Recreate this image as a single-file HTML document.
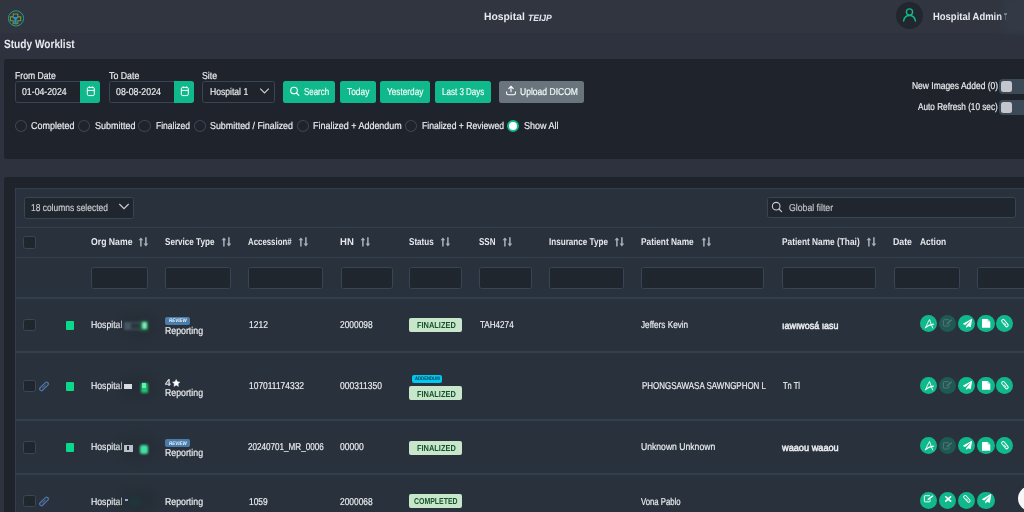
<!DOCTYPE html>
<html><head><meta charset="utf-8"><style>
html,body{margin:0;padding:0;}
body{width:1024px;height:512px;overflow:hidden;position:relative;background:#2d323e;font-family:'Liberation Sans', sans-serif;text-rendering:geometricPrecision;}
</style></head><body>
<div style="position:absolute;left:0px;top:0px;width:1024px;height:33px;background:#30353f;"></div>
<svg style="position:absolute;left:7px;top:10px" width="18" height="18" viewBox="0 0 18 18"><circle cx="9" cy="8.4" r="7.6" fill="none" stroke="#1f9f95" stroke-width="1"/><path d="M6.2 4h4.6v2.9h2.9v3.8h-2.9v3H6.2v-3H3.4V6.9h2.8z" fill="none" stroke="#7a9a30" stroke-width="1.1"/><path d="M5.3 7.1h6.4l-2.1 2.5v3.7H7.4V9.6z" fill="#2a8ed0"/></svg>
<div id="t1" style="position:absolute;left:483.7px;top:12px;font:700 10.5px/1 'Liberation Sans', sans-serif;color:#e8eaee;white-space:nowrap;transform:scaleX(0.9847);transform-origin:0 0;">Hospital</div>
<div id="t2" style="position:absolute;left:527.5px;top:14px;font:700 9px/1 'Liberation Sans', sans-serif;color:#e4e8ee;white-space:nowrap;transform:scaleX(0.9498);transform-origin:0 0;filter:blur(.45px);font-style:italic;">TEIJP</div>
<div style="position:absolute;left:896px;top:1.7px;width:27px;height:27px;border-radius:50%;background:#22262e"></div>
<svg style="position:absolute;left:900px;top:6px" width="19" height="19" viewBox="0 0 19 19"><circle cx="9.5" cy="6" r="3.1" fill="none" stroke="#12b886" stroke-width="1.4"/><path d="M3.6 14.9c.6-3.3 3-5.3 5.9-5.3s5.3 2 5.9 5.3" fill="none" stroke="#12b886" stroke-width="1.5" stroke-linecap="round"/></svg>
<div id="t3" style="position:absolute;left:932.7px;top:12px;font:700 10.5px/1 'Liberation Sans', sans-serif;color:#e8eaee;white-space:nowrap;transform:scaleX(0.9008);transform-origin:0 0;">Hospital Admin</div>
<div style="position:absolute;left:1002px;top:-4px;width:30px;height:38px;background:#3a4452;opacity:.35;filter:blur(4px)"></div>
<div style="position:absolute;left:1003.5px;top:13px;width:3px;height:1.5px;background:#9aa4b0;opacity:.6"></div><div style="position:absolute;left:1004.5px;top:14px;width:1px;height:6px;background:#9aa4b0;opacity:.35"></div>
<div id="t4" style="position:absolute;left:4px;top:38px;font:700 12px/1 'Liberation Sans', sans-serif;color:#e8eaee;white-space:nowrap;transform:scaleX(0.8434);transform-origin:0 0;">Study Worklist</div>
<div style="position:absolute;left:4px;top:59px;width:1030px;height:100px;background:#1f232b;border-radius:2.5px;"></div>
<div id="t5" style="position:absolute;left:15px;top:72px;font:400 10px/1 'Liberation Sans', sans-serif;color:#eceef1;white-space:nowrap;-webkit-text-stroke:0.18px;transform:scaleX(0.8614);transform-origin:0 0;">From Date</div>
<div id="t6" style="position:absolute;left:108.6px;top:72px;font:400 10px/1 'Liberation Sans', sans-serif;color:#eceef1;white-space:nowrap;-webkit-text-stroke:0.18px;transform:scaleX(0.8791);transform-origin:0 0;">To Date</div>
<div id="t7" style="position:absolute;left:202.3px;top:72px;font:400 10px/1 'Liberation Sans', sans-serif;color:#eceef1;white-space:nowrap;-webkit-text-stroke:0.18px;transform:scaleX(0.8762);transform-origin:0 0;">Site</div>
<div style="position:absolute;left:15px;top:81px;width:85px;height:22px;background:#1f232b;box-sizing:border-box;border:1px solid #384554;border-radius:2.5px;"></div>
<div style="position:absolute;left:79.5px;top:81px;width:20.5px;height:22px;background:#10b98b;border-radius:0 3px 3px 0;"></div>
<svg style="position:absolute;left:79.5px;top:81px" width="20.5" height="22" viewBox="0 0 20.5 22"><rect x="7.3" y="6.4" width="7" height="8.2" rx="1.4" fill="none" stroke="#fff" stroke-width="1"/><path d="M7.3 9.4h7M9.3 5.4v1.8M12.3 5.4v1.8" stroke="#fff" stroke-width="1"/></svg>
<div id="t8" style="position:absolute;left:22px;top:88px;font:400 10px/1 'Liberation Sans', sans-serif;color:#eceef1;white-space:nowrap;-webkit-text-stroke:0.18px;transform:scaleX(0.8738);transform-origin:0 0;">01-04-2024</div>
<div style="position:absolute;left:108.5px;top:81px;width:85.5px;height:22px;background:#1f232b;box-sizing:border-box;border:1px solid #384554;border-radius:2.5px;"></div>
<div style="position:absolute;left:173.5px;top:81px;width:20.5px;height:22px;background:#10b98b;border-radius:0 3px 3px 0;"></div>
<svg style="position:absolute;left:173.5px;top:81px" width="20.5" height="22" viewBox="0 0 20.5 22"><rect x="7.3" y="6.4" width="7" height="8.2" rx="1.4" fill="none" stroke="#fff" stroke-width="1"/><path d="M7.3 9.4h7M9.3 5.4v1.8M12.3 5.4v1.8" stroke="#fff" stroke-width="1"/></svg>
<div id="t9" style="position:absolute;left:115.5px;top:88px;font:400 10px/1 'Liberation Sans', sans-serif;color:#eceef1;white-space:nowrap;-webkit-text-stroke:0.18px;transform:scaleX(0.8777);transform-origin:0 0;">08-08-2024</div>
<div style="position:absolute;left:202px;top:81px;width:73px;height:22px;background:#1f232b;box-sizing:border-box;border:1px solid #384554;border-radius:2.5px;"></div>
<div id="t10" style="position:absolute;left:209.5px;top:88px;font:400 10px/1 'Liberation Sans', sans-serif;color:#eceef1;white-space:nowrap;-webkit-text-stroke:0.18px;transform:scaleX(0.8587);transform-origin:0 0;">Hospital 1</div>
<svg style="position:absolute;left:259px;top:87px" width="11" height="8" viewBox="0 0 11 8"><path d="M1.2 1.6l4.3 4.3 4.3-4.3" fill="none" stroke="#c9ced5" stroke-width="1.2"/></svg>
<div style="position:absolute;left:283px;top:81px;width:52px;height:22px;background:#10b98b;border-radius:2.5px;"></div>
<div id="t11" style="position:absolute;left:303.5px;top:88px;font:400 10px/1 'Liberation Sans', sans-serif;color:#f3fbf8;white-space:nowrap;-webkit-text-stroke:0.18px;transform:scaleX(0.7932);transform-origin:0 0;">Search</div>
<svg style="position:absolute;left:289px;top:86px" width="12" height="12" viewBox="0 0 12 12"><circle cx="5" cy="4.6" r="3.3" fill="none" stroke="#fff" stroke-width="1.1"/><path d="M7.4 7l2.4 2.4" stroke="#fff" stroke-width="1.2" stroke-linecap="round"/></svg>
<div style="position:absolute;left:340px;top:81px;width:36px;height:22px;background:#10b98b;border-radius:2.5px;"></div>
<div id="t12" style="position:absolute;left:347.3px;top:88px;font:400 10px/1 'Liberation Sans', sans-serif;color:#f3fbf8;white-space:nowrap;-webkit-text-stroke:0.18px;transform:scaleX(0.8383);transform-origin:0 0;">Today</div>
<div style="position:absolute;left:380px;top:81px;width:50px;height:22px;background:#10b98b;border-radius:2.5px;"></div>
<div id="t13" style="position:absolute;left:387.3px;top:88px;font:400 10px/1 'Liberation Sans', sans-serif;color:#f3fbf8;white-space:nowrap;-webkit-text-stroke:0.18px;transform:scaleX(0.8243);transform-origin:0 0;">Yesterday</div>
<div style="position:absolute;left:434.5px;top:81px;width:56.5px;height:22px;background:#10b98b;border-radius:2.5px;"></div>
<div id="t14" style="position:absolute;left:442.3px;top:88px;font:400 10px/1 'Liberation Sans', sans-serif;color:#f3fbf8;white-space:nowrap;-webkit-text-stroke:0.18px;transform:scaleX(0.8018);transform-origin:0 0;">Last 3 Days</div>
<div style="position:absolute;left:499px;top:81px;width:85px;height:22px;background:#6a747c;border-radius:2.5px;"></div>
<div id="t15" style="position:absolute;left:519.6px;top:88px;font:400 10px/1 'Liberation Sans', sans-serif;color:#f3fbf8;white-space:nowrap;-webkit-text-stroke:0.18px;transform:scaleX(0.8550);transform-origin:0 0;">Upload DICOM</div>
<svg style="position:absolute;left:505px;top:85px" width="12" height="12" viewBox="0 0 12 12"><path d="M6 7.3V1.5M3.5 3.9L6 1.3l2.5 2.6" fill="none" stroke="#fff" stroke-width="1.1"/><path d="M1.6 6.6v1.6a1.6 1.6 0 0 0 1.6 1.6h5.6a1.6 1.6 0 0 0 1.6-1.6V6.6" fill="none" stroke="#fff" stroke-width="1.1"/></svg>
<div style="position:absolute;left:14.5px;top:119.9px;width:12.6px;height:12.2px;box-sizing:border-box;border-radius:50%;border:1px solid #3b4654"></div>
<div id="t16" style="position:absolute;left:31px;top:122px;font:400 10px/1 'Liberation Sans', sans-serif;color:#eceef1;white-space:nowrap;-webkit-text-stroke:0.18px;transform:scaleX(0.8978);transform-origin:0 0;">Completed</div>
<div style="position:absolute;left:77.7px;top:119.9px;width:12.6px;height:12.2px;box-sizing:border-box;border-radius:50%;border:1px solid #3b4654"></div>
<div id="t17" style="position:absolute;left:94.7px;top:122px;font:400 10px/1 'Liberation Sans', sans-serif;color:#eceef1;white-space:nowrap;-webkit-text-stroke:0.18px;transform:scaleX(0.9021);transform-origin:0 0;">Submitted</div>
<div style="position:absolute;left:138.3px;top:119.9px;width:12.6px;height:12.2px;box-sizing:border-box;border-radius:50%;border:1px solid #3b4654"></div>
<div id="t18" style="position:absolute;left:155.6px;top:122px;font:400 10px/1 'Liberation Sans', sans-serif;color:#eceef1;white-space:nowrap;-webkit-text-stroke:0.18px;transform:scaleX(0.8514);transform-origin:0 0;">Finalized</div>
<div style="position:absolute;left:193.7px;top:119.9px;width:12.6px;height:12.2px;box-sizing:border-box;border-radius:50%;border:1px solid #3b4654"></div>
<div id="t19" style="position:absolute;left:210px;top:122px;font:400 10px/1 'Liberation Sans', sans-serif;color:#eceef1;white-space:nowrap;-webkit-text-stroke:0.18px;transform:scaleX(0.8888);transform-origin:0 0;">Submitted / Finalized</div>
<div style="position:absolute;left:296.7px;top:119.9px;width:12.6px;height:12.2px;box-sizing:border-box;border-radius:50%;border:1px solid #3b4654"></div>
<div id="t20" style="position:absolute;left:313px;top:122px;font:400 10px/1 'Liberation Sans', sans-serif;color:#eceef1;white-space:nowrap;-webkit-text-stroke:0.18px;transform:scaleX(0.8940);transform-origin:0 0;">Finalized + Addendum</div>
<div style="position:absolute;left:404.5px;top:119.9px;width:12.6px;height:12.2px;box-sizing:border-box;border-radius:50%;border:1px solid #3b4654"></div>
<div id="t21" style="position:absolute;left:421.6px;top:122px;font:400 10px/1 'Liberation Sans', sans-serif;color:#eceef1;white-space:nowrap;-webkit-text-stroke:0.18px;transform:scaleX(0.8600);transform-origin:0 0;">Finalized + Reviewed</div>
<div style="position:absolute;left:506.6px;top:119.7px;width:12.6px;height:12.6px;box-sizing:border-box;border-radius:50%;background:#fff;border:2.6px solid #10b98b"></div>
<div id="t22" style="position:absolute;left:523.5px;top:122px;font:400 10px/1 'Liberation Sans', sans-serif;color:#eceef1;white-space:nowrap;-webkit-text-stroke:0.18px;transform:scaleX(0.8999);transform-origin:0 0;">Show All</div>
<div id="t23" style="position:absolute;left:911.6px;top:82px;font:400 10px/1 'Liberation Sans', sans-serif;color:#eceef1;white-space:nowrap;-webkit-text-stroke:0.18px;transform:scaleX(0.8462);transform-origin:0 0;">New Images Added (0)</div>
<div id="t24" style="position:absolute;left:917.9px;top:103px;font:400 10px/1 'Liberation Sans', sans-serif;color:#eceef1;white-space:nowrap;-webkit-text-stroke:0.18px;transform:scaleX(0.8199);transform-origin:0 0;">Auto Refresh (10 sec)</div>
<div style="position:absolute;left:999px;top:79.4px;width:40px;height:14.5px;background:#3c4957;border-radius:4px;"></div>
<div style="position:absolute;left:1001px;top:81.2px;width:11.2px;height:11px;background:#c3c7cd;border-radius:2.5px;"></div>
<div style="position:absolute;left:999px;top:100px;width:40px;height:14.5px;background:#3c4957;border-radius:4px;"></div>
<div style="position:absolute;left:1001px;top:101.8px;width:11.2px;height:11px;background:#c3c7cd;border-radius:2.5px;"></div>
<div style="position:absolute;left:4px;top:177px;width:1030px;height:400px;background:#1f232b;border-radius:2.5px;"></div>
<div style="position:absolute;left:14.5px;top:188px;width:1020px;height:400px;background:#29323c;box-sizing:border-box;border-top:1px solid #323f4c;border-left:1px solid #323f4c;"></div>
<div style="position:absolute;left:23.8px;top:197px;width:110px;height:21.8px;background:#20262e;box-sizing:border-box;border:1px solid #384554;border-radius:2.5px;"></div>
<div id="t25" style="position:absolute;left:30.8px;top:204px;font:400 10px/1 'Liberation Sans', sans-serif;color:#c9cdd3;white-space:nowrap;-webkit-text-stroke:0.18px;transform:scaleX(0.8431);transform-origin:0 0;">18 columns selected</div>
<svg style="position:absolute;left:117.5px;top:202px" width="12" height="9" viewBox="0 0 12 9"><path d="M1.3 2l4.7 4.6 4.7-4.6" fill="none" stroke="#c9ced5" stroke-width="1.2"/></svg>
<div style="position:absolute;left:766.5px;top:197.3px;width:249.5px;height:21px;background:#20262e;box-sizing:border-box;border:1px solid #384554;border-radius:2.5px;"></div>
<svg style="position:absolute;left:771px;top:201px" width="12" height="12" viewBox="0 0 12 12"><circle cx="5.2" cy="5.2" r="3.8" fill="none" stroke="#c9ced5" stroke-width="1.1"/><path d="M8 8l2.6 2.6" stroke="#c9ced5" stroke-width="1.2" stroke-linecap="round"/></svg>
<div id="t26" style="position:absolute;left:788.6px;top:204px;font:400 10px/1 'Liberation Sans', sans-serif;color:#bfc4ca;white-space:nowrap;-webkit-text-stroke:0.18px;transform:scaleX(0.8718);transform-origin:0 0;">Global filter</div>
<div style="position:absolute;left:14.5px;top:226.6px;width:1020px;height:1.8px;background:#323f4c;"></div>
<div style="position:absolute;left:14.5px;top:256.6px;width:1020px;height:1.8px;background:#323f4c;"></div>
<div style="position:absolute;left:14.5px;top:297.1px;width:1020px;height:1.8px;background:#323f4c;"></div>
<div style="position:absolute;left:14.5px;top:351.20000000000005px;width:1020px;height:1.8px;background:#323f4c;"></div>
<div style="position:absolute;left:14.5px;top:419.1px;width:1020px;height:1.8px;background:#323f4c;"></div>
<div style="position:absolute;left:14.5px;top:473.1px;width:1020px;height:1.8px;background:#323f4c;"></div>
<div style="position:absolute;left:23.3px;top:236.1px;width:12.6px;height:12.6px;background:#20262e;box-sizing:border-box;border:1px solid #3a4654;border-radius:2.5px;"></div>
<div id="t27" style="position:absolute;left:90.5px;top:238px;font:700 10px/1 'Liberation Sans', sans-serif;color:#e6e8ec;white-space:nowrap;transform:scaleX(0.8681);transform-origin:0 0;">Org Name</div>
<svg style="position:absolute;left:138.3px;top:236.8px" width="11" height="10" viewBox="0 0 11 10"><path d="M2.9 9.5V2.5M7.9 0.3v7" stroke="#a9b1ba" stroke-width="1.5"/><path d="M0.6 3.3L2.9 0.5 5.2 3.3z M5.6 6.5L7.9 9.4 10.2 6.5z" fill="#a9b1ba"/></svg>
<div id="t28" style="position:absolute;left:165px;top:238px;font:700 10px/1 'Liberation Sans', sans-serif;color:#e6e8ec;white-space:nowrap;transform:scaleX(0.8110);transform-origin:0 0;">Service Type</div>
<svg style="position:absolute;left:220.5px;top:236.8px" width="11" height="10" viewBox="0 0 11 10"><path d="M2.9 9.5V2.5M7.9 0.3v7" stroke="#a9b1ba" stroke-width="1.5"/><path d="M0.6 3.3L2.9 0.5 5.2 3.3z M5.6 6.5L7.9 9.4 10.2 6.5z" fill="#a9b1ba"/></svg>
<div id="t29" style="position:absolute;left:248px;top:238px;font:700 10px/1 'Liberation Sans', sans-serif;color:#e6e8ec;white-space:nowrap;transform:scaleX(0.7847);transform-origin:0 0;">Accession#</div>
<svg style="position:absolute;left:298.3px;top:236.8px" width="11" height="10" viewBox="0 0 11 10"><path d="M2.9 9.5V2.5M7.9 0.3v7" stroke="#a9b1ba" stroke-width="1.5"/><path d="M0.6 3.3L2.9 0.5 5.2 3.3z M5.6 6.5L7.9 9.4 10.2 6.5z" fill="#a9b1ba"/></svg>
<div id="t30" style="position:absolute;left:340px;top:238px;font:700 10px/1 'Liberation Sans', sans-serif;color:#e6e8ec;white-space:nowrap;transform:scaleX(0.9522);transform-origin:0 0;">HN</div>
<svg style="position:absolute;left:360.0px;top:236.8px" width="11" height="10" viewBox="0 0 11 10"><path d="M2.9 9.5V2.5M7.9 0.3v7" stroke="#a9b1ba" stroke-width="1.5"/><path d="M0.6 3.3L2.9 0.5 5.2 3.3z M5.6 6.5L7.9 9.4 10.2 6.5z" fill="#a9b1ba"/></svg>
<div id="t31" style="position:absolute;left:409.3px;top:238px;font:700 10px/1 'Liberation Sans', sans-serif;color:#e6e8ec;white-space:nowrap;transform:scaleX(0.8063);transform-origin:0 0;">Status</div>
<svg style="position:absolute;left:440.3px;top:236.8px" width="11" height="10" viewBox="0 0 11 10"><path d="M2.9 9.5V2.5M7.9 0.3v7" stroke="#a9b1ba" stroke-width="1.5"/><path d="M0.6 3.3L2.9 0.5 5.2 3.3z M5.6 6.5L7.9 9.4 10.2 6.5z" fill="#a9b1ba"/></svg>
<div id="t32" style="position:absolute;left:479.3px;top:238px;font:700 10px/1 'Liberation Sans', sans-serif;color:#e6e8ec;white-space:nowrap;transform:scaleX(0.7995);transform-origin:0 0;">SSN</div>
<svg style="position:absolute;left:502.0px;top:236.8px" width="11" height="10" viewBox="0 0 11 10"><path d="M2.9 9.5V2.5M7.9 0.3v7" stroke="#a9b1ba" stroke-width="1.5"/><path d="M0.6 3.3L2.9 0.5 5.2 3.3z M5.6 6.5L7.9 9.4 10.2 6.5z" fill="#a9b1ba"/></svg>
<div id="t33" style="position:absolute;left:548.8px;top:238px;font:700 10px/1 'Liberation Sans', sans-serif;color:#e6e8ec;white-space:nowrap;transform:scaleX(0.8117);transform-origin:0 0;">Insurance Type</div>
<svg style="position:absolute;left:614.0px;top:236.8px" width="11" height="10" viewBox="0 0 11 10"><path d="M2.9 9.5V2.5M7.9 0.3v7" stroke="#a9b1ba" stroke-width="1.5"/><path d="M0.6 3.3L2.9 0.5 5.2 3.3z M5.6 6.5L7.9 9.4 10.2 6.5z" fill="#a9b1ba"/></svg>
<div id="t34" style="position:absolute;left:641.3px;top:238px;font:700 10px/1 'Liberation Sans', sans-serif;color:#e6e8ec;white-space:nowrap;transform:scaleX(0.8313);transform-origin:0 0;">Patient Name</div>
<svg style="position:absolute;left:700.8px;top:236.8px" width="11" height="10" viewBox="0 0 11 10"><path d="M2.9 9.5V2.5M7.9 0.3v7" stroke="#a9b1ba" stroke-width="1.5"/><path d="M0.6 3.3L2.9 0.5 5.2 3.3z M5.6 6.5L7.9 9.4 10.2 6.5z" fill="#a9b1ba"/></svg>
<div id="t35" style="position:absolute;left:781.8px;top:238px;font:700 10px/1 'Liberation Sans', sans-serif;color:#e6e8ec;white-space:nowrap;transform:scaleX(0.8319);transform-origin:0 0;">Patient Name (Thai)</div>
<svg style="position:absolute;left:865.8px;top:236.8px" width="11" height="10" viewBox="0 0 11 10"><path d="M2.9 9.5V2.5M7.9 0.3v7" stroke="#a9b1ba" stroke-width="1.5"/><path d="M0.6 3.3L2.9 0.5 5.2 3.3z M5.6 6.5L7.9 9.4 10.2 6.5z" fill="#a9b1ba"/></svg>
<div id="t36" style="position:absolute;left:893px;top:238px;font:700 10px/1 'Liberation Sans', sans-serif;color:#e6e8ec;white-space:nowrap;transform:scaleX(0.8762);transform-origin:0 0;">Date</div>
<div id="t37" style="position:absolute;left:920px;top:238px;font:700 10px/1 'Liberation Sans', sans-serif;color:#e6e8ec;white-space:nowrap;transform:scaleX(0.8413);transform-origin:0 0;">Action</div>
<div style="position:absolute;left:91.3px;top:267px;width:56.7px;height:21.6px;background:#20262e;box-sizing:border-box;border:1px solid #384554;border-radius:2.5px;"></div>
<div style="position:absolute;left:165px;top:267px;width:65.80000000000001px;height:21.6px;background:#20262e;box-sizing:border-box;border:1px solid #384554;border-radius:2.5px;"></div>
<div style="position:absolute;left:248px;top:267px;width:75px;height:21.6px;background:#20262e;box-sizing:border-box;border:1px solid #384554;border-radius:2.5px;"></div>
<div style="position:absolute;left:340.5px;top:267px;width:52.0px;height:21.6px;background:#20262e;box-sizing:border-box;border:1px solid #384554;border-radius:2.5px;"></div>
<div style="position:absolute;left:409px;top:267px;width:52.80000000000001px;height:21.6px;background:#20262e;box-sizing:border-box;border:1px solid #384554;border-radius:2.5px;"></div>
<div style="position:absolute;left:479.3px;top:267px;width:52.49999999999994px;height:21.6px;background:#20262e;box-sizing:border-box;border:1px solid #384554;border-radius:2.5px;"></div>
<div style="position:absolute;left:549.3px;top:267px;width:75.0px;height:21.6px;background:#20262e;box-sizing:border-box;border:1px solid #384554;border-radius:2.5px;"></div>
<div style="position:absolute;left:641.3px;top:267px;width:123.20000000000005px;height:21.6px;background:#20262e;box-sizing:border-box;border:1px solid #384554;border-radius:2.5px;"></div>
<div style="position:absolute;left:781.8px;top:267px;width:94.5px;height:21.6px;background:#20262e;box-sizing:border-box;border:1px solid #384554;border-radius:2.5px;"></div>
<div style="position:absolute;left:893.5px;top:267px;width:66.29999999999995px;height:21.6px;background:#20262e;box-sizing:border-box;border:1px solid #384554;border-radius:2.5px;"></div>
<div style="position:absolute;left:977.3px;top:267px;width:82.70000000000005px;height:21.6px;background:#20262e;box-sizing:border-box;border:1px solid #384554;border-radius:2.5px;"></div>
<div style="position:absolute;left:23.3px;top:318.9px;width:12.6px;height:12.6px;background:#20262e;box-sizing:border-box;border:1px solid #3a4654;border-radius:2.5px;"></div>
<div style="position:absolute;left:66px;top:320.9px;width:8.3px;height:9px;background:#08d98a;border-radius:1px;"></div>
<div id="t38" style="position:absolute;left:90.9px;top:321px;font:400 10px/1 'Liberation Sans', sans-serif;color:#eceef1;white-space:nowrap;-webkit-text-stroke:0.18px;transform:scaleX(0.8687);transform-origin:0 0;">Hospital</div>
<div style="position:absolute;left:118px;top:312.5px;width:40px;height:26px;border-radius:50%;background:#202830;opacity:.35;filter:blur(4px)"></div>
<div style="position:absolute;left:124px;top:321.5px;width:17px;height:8px;background:#5c7080;opacity:.6;filter:blur(1.3px)"></div>
<div style="position:absolute;left:131px;top:322.5px;width:10px;height:6px;background:#10181e;opacity:.5;filter:blur(1px)"></div>
<div style="position:absolute;left:140px;top:320.5px;width:8px;height:10px;background:#187040;opacity:.8;filter:blur(1.5px)"></div>
<div style="position:absolute;left:142px;top:321.9px;width:5px;height:7px;background:#80e8b8;border-radius:1px;filter:blur(1px)"></div>
<div style="position:absolute;left:165.4px;top:316.6px;width:24.3px;height:8.1px;background:#4a7cab;border-radius:2px;"></div>
<div id="t39" style="position:absolute;left:169px;top:319px;font:700 5.2px/1 'Liberation Sans', sans-serif;color:#e8f0f8;white-space:nowrap;transform:scaleX(0.8644);transform-origin:0 0;font-style:italic;">REVIEW</div>
<div id="t40" style="position:absolute;left:165px;top:327px;font:400 10px/1 'Liberation Sans', sans-serif;color:#eceef1;white-space:nowrap;-webkit-text-stroke:0.18px;transform:scaleX(0.8765);transform-origin:0 0;">Reporting</div>
<div id="t41" style="position:absolute;left:248.8px;top:321px;font:400 10px/1 'Liberation Sans', sans-serif;color:#eceef1;white-space:nowrap;-webkit-text-stroke:0.18px;transform:scaleX(0.8485);transform-origin:0 0;">1212</div>
<div id="t42" style="position:absolute;left:340.3px;top:321px;font:400 10px/1 'Liberation Sans', sans-serif;color:#eceef1;white-space:nowrap;-webkit-text-stroke:0.18px;transform:scaleX(0.8390);transform-origin:0 0;">2000098</div>
<div style="position:absolute;left:409.4px;top:318px;width:52.6px;height:14px;background:#c8e6c9;border-radius:2px;"></div>
<div id="t43" style="position:absolute;left:416.9px;top:321px;font:700 8.6px/1 'Liberation Sans', sans-serif;color:#175230;white-space:nowrap;transform:scaleX(0.8644);transform-origin:0 0;">FINALIZED</div>
<div id="t44" style="position:absolute;left:480px;top:321px;font:400 10px/1 'Liberation Sans', sans-serif;color:#eceef1;white-space:nowrap;-webkit-text-stroke:0.18px;transform:scaleX(0.8105);transform-origin:0 0;">TAH4274</div>
<div id="t45" style="position:absolute;left:641.3px;top:321px;font:400 10px/1 'Liberation Sans', sans-serif;color:#eceef1;white-space:nowrap;-webkit-text-stroke:0.18px;transform:scaleX(0.8183);transform-origin:0 0;">Jeffers Kevin</div>
<div id="t46" style="position:absolute;left:782.3px;top:322px;font:400 10px/1 'Liberation Sans', sans-serif;color:#eceef1;white-space:nowrap;-webkit-text-stroke:0.18px;transform:scaleX(0.8917);transform-origin:0 0;-webkit-text-stroke:0.5px;">ıawıwosá ıasu</div>
<div style="position:absolute;left:919.9px;top:314.9px;width:17.2px;height:17.2px;border-radius:50%;background:#10b98b"></div>
<svg style="position:absolute;left:925.10px;top:318.90px;overflow:visible" width="9.00" height="9.80" viewBox="0 0 100 100" preserveAspectRatio="none"><path d="M6 90C18 62 34 30 50 6C62 36 72 64 86 92" fill="none" stroke="#fff" stroke-width="10" stroke-linecap="round" stroke-linejoin="round"/><path d="M4 88C26 68 56 56 94 52" fill="none" stroke="#fff" stroke-width="11" stroke-linecap="round"/></svg>
<div style="position:absolute;left:938.9px;top:314.9px;width:17.2px;height:17.2px;border-radius:50%;background:#1d5a52"></div>
<svg style="position:absolute;left:942.90px;top:319.30px;overflow:visible" width="9.40" height="7.40" viewBox="0 0 100 80" preserveAspectRatio="none"><path d="M62 8H10Q4 8 4 14V70Q4 76 10 76H58Q64 76 64 70V48" fill="none" stroke="#62707a" stroke-width="10"/><path d="M34 60L40 42L88 4L98 14L52 52Z" fill="#62707a"/></svg>
<div style="position:absolute;left:958.0px;top:314.9px;width:17.2px;height:17.2px;border-radius:50%;background:#10b98b"></div>
<svg style="position:absolute;left:962.70px;top:319.00px;overflow:visible" width="9.10" height="8.70" viewBox="0 0 512 512" preserveAspectRatio="none"><path fill="#fff" d="M476 3.2L12.5 270.6c-18.1 10.4-15.8 35.6 2.2 43.2L121 358.4l287.3-253.2c5.5-4.9 13.3 2.6 8.6 8.3L176 407v80.5c0 23.6 28.5 32.9 42.5 15.8L282 426l124.6 52.2c14.2 6 30.4-2.9 33-18.2l72-432C515 7.8 493.3-6.8 476 3.2z"/></svg>
<div style="position:absolute;left:977.4px;top:314.9px;width:17.2px;height:17.2px;border-radius:50%;background:#10b98b"></div>
<svg style="position:absolute;left:982.00px;top:319.30px;overflow:visible" width="8.30" height="8.70" viewBox="0 0 83 87" preserveAspectRatio="none"><path d="M0 0H56L83 27V87H0Z" fill="#fff"/><path d="M56 0V27H83Z" fill="#a9dfd0"/></svg>
<div style="position:absolute;left:996.3px;top:314.9px;width:17.2px;height:17.2px;border-radius:50%;background:#10b98b"></div>
<svg style="position:absolute;left:1001.40px;top:319.00px;overflow:visible" width="7.90" height="8.50" viewBox="0 0 80 85" preserveAspectRatio="none"><path d="M22 20L58 63" stroke="#fff" stroke-width="40" stroke-linecap="round"/><path d="M22 20L58 63" stroke="#10b98b" stroke-width="20" stroke-linecap="round"/><path d="M34 40L50 59" stroke="#fff" stroke-width="9" stroke-linecap="round"/></svg>
<div style="position:absolute;left:23.3px;top:379.9px;width:12.6px;height:12.6px;background:#20262e;box-sizing:border-box;border:1px solid #3a4654;border-radius:2.5px;"></div>
<div style="position:absolute;left:66px;top:381.5px;width:8.3px;height:9px;background:#08d98a;border-radius:1px;"></div>
<svg style="position:absolute;left:38px;top:380.5px" width="12" height="11" viewBox="0 0 12 11"><path d="M3.4 8L8.6 2.9" stroke="#5276aa" stroke-width="4.6" stroke-linecap="round"/><path d="M3.4 8L8.6 2.9" stroke="#29323c" stroke-width="2.2" stroke-linecap="round"/><path d="M4.3 7.1L7.6 3.9" stroke="#5276aa" stroke-width="1"/></svg>
<div id="t47" style="position:absolute;left:90.9px;top:382px;font:400 10px/1 'Liberation Sans', sans-serif;color:#eceef1;white-space:nowrap;-webkit-text-stroke:0.18px;transform:scaleX(0.8687);transform-origin:0 0;">Hospital</div>
<div style="position:absolute;left:118px;top:373.5px;width:40px;height:26px;border-radius:50%;background:#202830;opacity:.35;filter:blur(4px)"></div>
<div style="position:absolute;left:124px;top:383.9px;width:8px;height:5.5px;background:#e8eef4;opacity:.9;filter:blur(.6px)"></div>
<div style="position:absolute;left:141px;top:382.5px;width:6.5px;height:10px;background:#1fc070;border-radius:1px;filter:blur(.8px)"></div>
<div style="position:absolute;left:142px;top:383.0px;width:4px;height:5px;background:#60f0b0;filter:blur(.7px)"></div>
<div id="t48" style="position:absolute;left:165px;top:379px;font:400 10px/1 'Liberation Sans', sans-serif;color:#eceef1;white-space:nowrap;-webkit-text-stroke:0.18px;transform:scaleX(1.0498);transform-origin:0 0;">4</div>
<svg style="position:absolute;left:172px;top:379.2px" width="8.4" height="8" viewBox="0 0 24 23"><path d="M12 1.5l3.1 6.6 7.2.9-5.3 5 1.4 7.1L12 17.6l-6.4 3.5L7 14 1.7 9l7.2-.9z" fill="#fff" stroke="#fff" stroke-width="1.6" stroke-linejoin="round"/></svg>
<div id="t49" style="position:absolute;left:165px;top:389px;font:400 10px/1 'Liberation Sans', sans-serif;color:#eceef1;white-space:nowrap;-webkit-text-stroke:0.18px;transform:scaleX(0.8764);transform-origin:0 0;">Reporting</div>
<div id="t50" style="position:absolute;left:249px;top:382px;font:400 10px/1 'Liberation Sans', sans-serif;color:#eceef1;white-space:nowrap;-webkit-text-stroke:0.18px;transform:scaleX(0.8439);transform-origin:0 0;">107011174332</div>
<div id="t51" style="position:absolute;left:340.4px;top:382px;font:400 10px/1 'Liberation Sans', sans-serif;color:#eceef1;white-space:nowrap;-webkit-text-stroke:0.18px;transform:scaleX(0.8492);transform-origin:0 0;">000311350</div>
<div style="position:absolute;left:412px;top:375px;width:30px;height:8.1px;background:#00c8f0;border-radius:2px;"></div>
<div id="t52" style="position:absolute;left:415px;top:377px;font:700 5px/1 'Liberation Sans', sans-serif;color:#0b3a4a;white-space:nowrap;transform:scaleX(0.8459);transform-origin:0 0;">ADDENDUM</div>
<div style="position:absolute;left:409.4px;top:386.3px;width:52.6px;height:14px;background:#c8e6c9;border-radius:2px;"></div>
<div id="t53" style="position:absolute;left:416.9px;top:390px;font:700 8.6px/1 'Liberation Sans', sans-serif;color:#175230;white-space:nowrap;transform:scaleX(0.8644);transform-origin:0 0;">FINALIZED</div>
<div id="t54" style="position:absolute;left:641.6px;top:382px;font:400 10px/1 'Liberation Sans', sans-serif;color:#eceef1;white-space:nowrap;-webkit-text-stroke:0.18px;transform:scaleX(0.7972);transform-origin:0 0;">PHONGSAWASA SAWNGPHON L</div>
<div id="t55" style="position:absolute;left:782.9px;top:382px;font:400 10px/1 'Liberation Sans', sans-serif;color:#eceef1;white-space:nowrap;-webkit-text-stroke:0.18px;transform:scaleX(0.7474);transform-origin:0 0;">Tn Tl</div>
<div style="position:absolute;left:919.9px;top:376.8px;width:17.2px;height:17.2px;border-radius:50%;background:#10b98b"></div>
<svg style="position:absolute;left:925.10px;top:380.80px;overflow:visible" width="9.00" height="9.80" viewBox="0 0 100 100" preserveAspectRatio="none"><path d="M6 90C18 62 34 30 50 6C62 36 72 64 86 92" fill="none" stroke="#fff" stroke-width="10" stroke-linecap="round" stroke-linejoin="round"/><path d="M4 88C26 68 56 56 94 52" fill="none" stroke="#fff" stroke-width="11" stroke-linecap="round"/></svg>
<div style="position:absolute;left:938.9px;top:376.8px;width:17.2px;height:17.2px;border-radius:50%;background:#1d5a52"></div>
<svg style="position:absolute;left:942.90px;top:381.20px;overflow:visible" width="9.40" height="7.40" viewBox="0 0 100 80" preserveAspectRatio="none"><path d="M62 8H10Q4 8 4 14V70Q4 76 10 76H58Q64 76 64 70V48" fill="none" stroke="#62707a" stroke-width="10"/><path d="M34 60L40 42L88 4L98 14L52 52Z" fill="#62707a"/></svg>
<div style="position:absolute;left:958.0px;top:376.8px;width:17.2px;height:17.2px;border-radius:50%;background:#10b98b"></div>
<svg style="position:absolute;left:962.70px;top:380.90px;overflow:visible" width="9.10" height="8.70" viewBox="0 0 512 512" preserveAspectRatio="none"><path fill="#fff" d="M476 3.2L12.5 270.6c-18.1 10.4-15.8 35.6 2.2 43.2L121 358.4l287.3-253.2c5.5-4.9 13.3 2.6 8.6 8.3L176 407v80.5c0 23.6 28.5 32.9 42.5 15.8L282 426l124.6 52.2c14.2 6 30.4-2.9 33-18.2l72-432C515 7.8 493.3-6.8 476 3.2z"/></svg>
<div style="position:absolute;left:977.4px;top:376.8px;width:17.2px;height:17.2px;border-radius:50%;background:#10b98b"></div>
<svg style="position:absolute;left:982.00px;top:381.20px;overflow:visible" width="8.30" height="8.70" viewBox="0 0 83 87" preserveAspectRatio="none"><path d="M0 0H56L83 27V87H0Z" fill="#fff"/><path d="M56 0V27H83Z" fill="#a9dfd0"/></svg>
<div style="position:absolute;left:996.3px;top:376.8px;width:17.2px;height:17.2px;border-radius:50%;background:#10b98b"></div>
<svg style="position:absolute;left:1001.40px;top:380.90px;overflow:visible" width="7.90" height="8.50" viewBox="0 0 80 85" preserveAspectRatio="none"><path d="M22 20L58 63" stroke="#fff" stroke-width="40" stroke-linecap="round"/><path d="M22 20L58 63" stroke="#10b98b" stroke-width="20" stroke-linecap="round"/><path d="M34 40L50 59" stroke="#fff" stroke-width="9" stroke-linecap="round"/></svg>
<div style="position:absolute;left:23.3px;top:441.2px;width:12.6px;height:12.6px;background:#20262e;box-sizing:border-box;border:1px solid #3a4654;border-radius:2.5px;"></div>
<div style="position:absolute;left:66px;top:442.9px;width:8.3px;height:9px;background:#08d98a;border-radius:1px;"></div>
<div id="t56" style="position:absolute;left:90.9px;top:443px;font:400 10px/1 'Liberation Sans', sans-serif;color:#eceef1;white-space:nowrap;-webkit-text-stroke:0.18px;transform:scaleX(0.8687);transform-origin:0 0;">Hospital</div>
<div style="position:absolute;left:118px;top:435px;width:40px;height:26px;border-radius:50%;background:#202830;opacity:.35;filter:blur(4px)"></div>
<div style="position:absolute;left:124px;top:444.5px;width:8.5px;height:7px;background:#d0dae4;opacity:.85;filter:blur(.7px)"></div>
<div style="position:absolute;left:126.5px;top:446px;width:2px;height:4px;background:#1f2a34;filter:blur(.4px)"></div>
<div style="position:absolute;left:140.2px;top:445.2px;width:8px;height:9px;background:#40e0a0;border-radius:2px;filter:blur(.8px)"></div>
<div style="position:absolute;left:165.4px;top:439.2px;width:24.3px;height:8.1px;background:#4a7cab;border-radius:2px;"></div>
<div id="t57" style="position:absolute;left:169px;top:442px;font:700 5.2px/1 'Liberation Sans', sans-serif;color:#e8f0f8;white-space:nowrap;transform:scaleX(0.8644);transform-origin:0 0;font-style:italic;">REVIEW</div>
<div id="t58" style="position:absolute;left:165px;top:449px;font:400 10px/1 'Liberation Sans', sans-serif;color:#eceef1;white-space:nowrap;-webkit-text-stroke:0.18px;transform:scaleX(0.8764);transform-origin:0 0;">Reporting</div>
<div id="t59" style="position:absolute;left:248.4px;top:443px;font:400 10px/1 'Liberation Sans', sans-serif;color:#eceef1;white-space:nowrap;-webkit-text-stroke:0.18px;transform:scaleX(0.8108);transform-origin:0 0;">20240701_MR_0006</div>
<div id="t60" style="position:absolute;left:340.4px;top:443px;font:400 10px/1 'Liberation Sans', sans-serif;color:#eceef1;white-space:nowrap;-webkit-text-stroke:0.18px;transform:scaleX(0.8551);transform-origin:0 0;">00000</div>
<div style="position:absolute;left:409.4px;top:440.8px;width:52.6px;height:14px;background:#c8e6c9;border-radius:2px;"></div>
<div id="t61" style="position:absolute;left:416.9px;top:444px;font:700 8.6px/1 'Liberation Sans', sans-serif;color:#175230;white-space:nowrap;transform:scaleX(0.8644);transform-origin:0 0;">FINALIZED</div>
<div id="t62" style="position:absolute;left:641.3px;top:443px;font:400 10px/1 'Liberation Sans', sans-serif;color:#eceef1;white-space:nowrap;-webkit-text-stroke:0.18px;transform:scaleX(0.8609);transform-origin:0 0;">Unknown Unknown</div>
<div id="t63" style="position:absolute;left:782.3px;top:444px;font:400 10px/1 'Liberation Sans', sans-serif;color:#eceef1;white-space:nowrap;-webkit-text-stroke:0.18px;transform:scaleX(0.9192);transform-origin:0 0;-webkit-text-stroke:0.5px;">waaou waaou</div>
<div style="position:absolute;left:919.9px;top:437.3px;width:17.2px;height:17.2px;border-radius:50%;background:#10b98b"></div>
<svg style="position:absolute;left:925.10px;top:441.30px;overflow:visible" width="9.00" height="9.80" viewBox="0 0 100 100" preserveAspectRatio="none"><path d="M6 90C18 62 34 30 50 6C62 36 72 64 86 92" fill="none" stroke="#fff" stroke-width="10" stroke-linecap="round" stroke-linejoin="round"/><path d="M4 88C26 68 56 56 94 52" fill="none" stroke="#fff" stroke-width="11" stroke-linecap="round"/></svg>
<div style="position:absolute;left:938.9px;top:437.3px;width:17.2px;height:17.2px;border-radius:50%;background:#1d5a52"></div>
<svg style="position:absolute;left:942.90px;top:441.70px;overflow:visible" width="9.40" height="7.40" viewBox="0 0 100 80" preserveAspectRatio="none"><path d="M62 8H10Q4 8 4 14V70Q4 76 10 76H58Q64 76 64 70V48" fill="none" stroke="#62707a" stroke-width="10"/><path d="M34 60L40 42L88 4L98 14L52 52Z" fill="#62707a"/></svg>
<div style="position:absolute;left:958.0px;top:437.3px;width:17.2px;height:17.2px;border-radius:50%;background:#10b98b"></div>
<svg style="position:absolute;left:962.70px;top:441.40px;overflow:visible" width="9.10" height="8.70" viewBox="0 0 512 512" preserveAspectRatio="none"><path fill="#fff" d="M476 3.2L12.5 270.6c-18.1 10.4-15.8 35.6 2.2 43.2L121 358.4l287.3-253.2c5.5-4.9 13.3 2.6 8.6 8.3L176 407v80.5c0 23.6 28.5 32.9 42.5 15.8L282 426l124.6 52.2c14.2 6 30.4-2.9 33-18.2l72-432C515 7.8 493.3-6.8 476 3.2z"/></svg>
<div style="position:absolute;left:977.4px;top:437.3px;width:17.2px;height:17.2px;border-radius:50%;background:#10b98b"></div>
<svg style="position:absolute;left:982.00px;top:441.70px;overflow:visible" width="8.30" height="8.70" viewBox="0 0 83 87" preserveAspectRatio="none"><path d="M0 0H56L83 27V87H0Z" fill="#fff"/><path d="M56 0V27H83Z" fill="#a9dfd0"/></svg>
<div style="position:absolute;left:996.3px;top:437.3px;width:17.2px;height:17.2px;border-radius:50%;background:#10b98b"></div>
<svg style="position:absolute;left:1001.40px;top:441.40px;overflow:visible" width="7.90" height="8.50" viewBox="0 0 80 85" preserveAspectRatio="none"><path d="M22 20L58 63" stroke="#fff" stroke-width="40" stroke-linecap="round"/><path d="M22 20L58 63" stroke="#10b98b" stroke-width="20" stroke-linecap="round"/><path d="M34 40L50 59" stroke="#fff" stroke-width="9" stroke-linecap="round"/></svg>
<div style="position:absolute;left:23.3px;top:494.7px;width:12.6px;height:12.6px;background:#20262e;box-sizing:border-box;border:1px solid #3a4654;border-radius:2.5px;"></div>
<svg style="position:absolute;left:38px;top:495.5px" width="12" height="11" viewBox="0 0 12 11"><path d="M3.4 8L8.6 2.9" stroke="#5276aa" stroke-width="4.6" stroke-linecap="round"/><path d="M3.4 8L8.6 2.9" stroke="#29323c" stroke-width="2.2" stroke-linecap="round"/><path d="M4.3 7.1L7.6 3.9" stroke="#5276aa" stroke-width="1"/></svg>
<div id="t64" style="position:absolute;left:90.9px;top:498px;font:400 10px/1 'Liberation Sans', sans-serif;color:#eceef1;white-space:nowrap;-webkit-text-stroke:0.18px;transform:scaleX(0.8687);transform-origin:0 0;">Hospital</div>
<div style="position:absolute;left:118px;top:488px;width:40px;height:26px;border-radius:50%;background:#202830;opacity:.35;filter:blur(4px)"></div>
<div style="position:absolute;left:125px;top:498.5px;width:3px;height:2.5px;background:#c8d0ff;opacity:.8;filter:blur(.5px)"></div>
<div style="position:absolute;left:128px;top:497px;width:14px;height:10px;border-radius:50%;background:#1c3a38;opacity:.6;filter:blur(1.5px)"></div>
<div id="t65" style="position:absolute;left:165px;top:498px;font:400 10px/1 'Liberation Sans', sans-serif;color:#eceef1;white-space:nowrap;-webkit-text-stroke:0.18px;transform:scaleX(0.8764);transform-origin:0 0;">Reporting</div>
<div id="t66" style="position:absolute;left:248.8px;top:498px;font:400 10px/1 'Liberation Sans', sans-serif;color:#eceef1;white-space:nowrap;-webkit-text-stroke:0.18px;transform:scaleX(0.8392);transform-origin:0 0;">1059</div>
<div id="t67" style="position:absolute;left:340.3px;top:498px;font:400 10px/1 'Liberation Sans', sans-serif;color:#eceef1;white-space:nowrap;-webkit-text-stroke:0.18px;transform:scaleX(0.8390);transform-origin:0 0;">2000068</div>
<div style="position:absolute;left:409.4px;top:494px;width:52.6px;height:14px;background:#c8e6c9;border-radius:2px;"></div>
<div id="t68" style="position:absolute;left:414px;top:497px;font:700 8.6px/1 'Liberation Sans', sans-serif;color:#175230;white-space:nowrap;transform:scaleX(0.8090);transform-origin:0 0;">COMPLETED</div>
<div id="t69" style="position:absolute;left:641.3px;top:498px;font:400 10px/1 'Liberation Sans', sans-serif;color:#eceef1;white-space:nowrap;-webkit-text-stroke:0.18px;transform:scaleX(0.7743);transform-origin:0 0;">Vona Pablo</div>
<div style="position:absolute;left:919.9px;top:491.8px;width:17.2px;height:17.2px;border-radius:50%;background:#10b98b"></div>
<svg style="position:absolute;left:924.10px;top:495.40px;overflow:visible" width="9.60" height="7.20" viewBox="0 0 100 80" preserveAspectRatio="none"><path d="M62 8H10Q4 8 4 14V70Q4 76 10 76H58Q64 76 64 70V48" fill="none" stroke="#fff" stroke-width="10"/><path d="M34 60L40 42L88 4L98 14L52 52Z" fill="#fff"/></svg>
<div style="position:absolute;left:938.9px;top:491.8px;width:17.2px;height:17.2px;border-radius:50%;background:#10b98b"></div>
<svg style="position:absolute;left:944.90px;top:496.40px;overflow:visible" width="6.40" height="5.80" viewBox="0 0 100 100" preserveAspectRatio="none"><path d="M12 12L88 88M88 12L12 88" stroke="#fff" stroke-width="26" stroke-linecap="round"/></svg>
<div style="position:absolute;left:958.0px;top:491.8px;width:17.2px;height:17.2px;border-radius:50%;background:#10b98b"></div>
<svg style="position:absolute;left:963.30px;top:495.00px;overflow:visible" width="7.80" height="7.90" viewBox="0 0 80 85" preserveAspectRatio="none"><path d="M22 20L58 63" stroke="#fff" stroke-width="40" stroke-linecap="round"/><path d="M22 20L58 63" stroke="#10b98b" stroke-width="20" stroke-linecap="round"/><path d="M34 40L50 59" stroke="#fff" stroke-width="9" stroke-linecap="round"/></svg>
<div style="position:absolute;left:977.4px;top:491.8px;width:17.2px;height:17.2px;border-radius:50%;background:#10b98b"></div>
<svg style="position:absolute;left:981.70px;top:494.40px;overflow:visible" width="9.30" height="9.30" viewBox="0 0 512 512" preserveAspectRatio="none"><path fill="#fff" d="M476 3.2L12.5 270.6c-18.1 10.4-15.8 35.6 2.2 43.2L121 358.4l287.3-253.2c5.5-4.9 13.3 2.6 8.6 8.3L176 407v80.5c0 23.6 28.5 32.9 42.5 15.8L282 426l124.6 52.2c14.2 6 30.4-2.9 33-18.2l72-432C515 7.8 493.3-6.8 476 3.2z"/></svg>
<div style="position:absolute;left:1018px;top:486.3px;width:25px;height:25px;border-radius:50%;background:#f7f7f8"></div>
</body></html>
